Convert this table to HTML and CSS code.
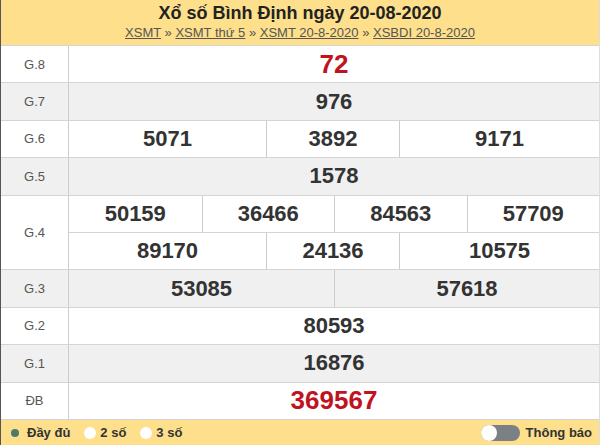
FILE: index.html
```html
<!DOCTYPE html>
<html lang="vi">
<head>
<meta charset="utf-8">
<title>Xổ số Bình Định ngày 20-08-2020</title>
<link rel="stylesheet" href="styles.css">
</head>
<body>
<div class="box">
  <header class="head">
    <h1 class="title">Xổ số Bình Định ngày 20-08-2020</h1>
    <nav class="crumbs">
      <a href="#">XSMT</a> <span class="sep">»</span> <a href="#">XSMT thứ 5</a> <span class="sep">»</span> <a href="#">XSMT 20-8-2020</a> <span class="sep">»</span> <a href="#">XSBDI 20-8-2020</a>
    </nav>
  </header>
  <div class="results">
    <div class="prize"><div class="label">G.8</div><div class="nums c1"><div class="num red">72</div></div></div>
    <div class="prize alt"><div class="label">G.7</div><div class="nums c1"><div class="num">976</div></div></div>
    <div class="prize"><div class="label">G.6</div><div class="nums c3"><div class="num">5071</div><div class="num">3892</div><div class="num">9171</div></div></div>
    <div class="prize alt"><div class="label">G.5</div><div class="nums c1"><div class="num">1578</div></div></div>
    <div class="prize tall"><div class="label">G.4</div>
      <div class="stack">
        <div class="nums c4"><div class="num">50159</div><div class="num">36466</div><div class="num">84563</div><div class="num">57709</div></div>
        <div class="nums c3"><div class="num">89170</div><div class="num">24136</div><div class="num">10575</div></div>
      </div>
    </div>
    <div class="prize alt"><div class="label">G.3</div><div class="nums c2"><div class="num">53085</div><div class="num">57618</div></div></div>
    <div class="prize"><div class="label">G.2</div><div class="nums c1"><div class="num">80593</div></div></div>
    <div class="prize alt"><div class="label">G.1</div><div class="nums c1"><div class="num">16876</div></div></div>
    <div class="prize"><div class="label">ĐB</div><div class="nums c1"><div class="num red">369567</div></div></div>
  </div>
  <footer class="foot">
    <div class="opts">
      <label class="opt"><span class="radio on"></span>Đầy đủ</label>
      <label class="opt"><span class="radio"></span>2 số</label>
      <label class="opt"><span class="radio"></span>3 số</label>
    </div>
    <div class="notify"><span class="toggle"><span class="knob"></span></span>Thông báo</div>
  </footer>
</div>
</body>
</html>
```

FILE: styles.css
```css
* { box-sizing: border-box; }
html, body { margin: 0; padding: 0; background: #fff; }
body { font-family: "Liberation Sans", Arial, sans-serif; color: #333; }

.box {
  width: 600px;
  height: 445px;
  border-left: 1px solid #555;
  border-right: 1px solid #ddd;
  display: flex;
  flex-direction: column;
}

.head {
  height: 45px;
  background: #fddf8c;
  text-align: center;
  padding-top: 3px;
}
.title {
  margin: 0;
  font-size: 18px;
  line-height: 20px;
  font-weight: bold;
  color: #222;
}
.crumbs {
  margin-top: 1px;
  font-size: 13px;
  line-height: 17px;
  color: #555;
}
.crumbs a { color: #555; text-decoration: underline; }
.crumbs .sep { color: #555; }

.results {
  height: 374px;
  display: grid;
  grid-template-rows: repeat(10, 1fr);
}
.prize {
  display: grid;
  grid-template-columns: 68px 1fr;
  border-top: 1px solid #d4d4d4;
  background: #fff;
}
.prize.alt { background: #f0f0f0; }
.prize.tall { grid-row: span 2; }

.label {
  border-right: 1px solid #ccc;
  display: flex;
  align-items: center;
  justify-content: center;
  font-size: 13px;
  color: #555;
}

.stack { display: grid; grid-template-rows: 1fr 1fr; }
.stack .nums + .nums { border-top: 1px solid #d4d4d4; }

.nums { display: grid; }
.nums.c1 { grid-template-columns: 1fr; }
.nums.c2 { grid-template-columns: 1fr 1fr; }
.nums.c3 { grid-template-columns: 197px 133px 1fr; }
.nums.c4 { grid-template-columns: repeat(4, 1fr); }

.num {
  display: flex;
  align-items: center;
  justify-content: center;
  font-size: 22px;
  font-weight: bold;
  color: #333;
}
.nums .num + .num { border-left: 1px solid #ccc; }
.num.red { color: #c1121f; font-size: 26px; }

.foot {
  height: 26px;
  background: #fddf8c;
  border-top: 1px solid #d4d4d4;
  display: flex;
  align-items: center;
  justify-content: space-between;
  padding: 0 7px 0 8px;
  font-size: 13px;
  font-weight: bold;
  color: #333;
}
.opts { display: flex; align-items: center; }
.opt { display: flex; align-items: center; margin-right: 14px; }
.radio {
  width: 12px;
  height: 12px;
  border-radius: 50%;
  background: #fff;
  margin-right: 4px;
}
.radio.on {
  width: 8px;
  height: 8px;
  background: #4d7a6c;
  margin: 0 8px 0 2px;
}
.notify { display: flex; align-items: center; }
.toggle {
  position: relative;
  width: 39px;
  height: 16px;
  border-radius: 8px;
  background: #7b7f86;
  margin-right: 6px;
}
.knob {
  position: absolute;
  left: 0;
  top: 0;
  width: 16px;
  height: 16px;
  border-radius: 50%;
  background: #fff;
}
```
